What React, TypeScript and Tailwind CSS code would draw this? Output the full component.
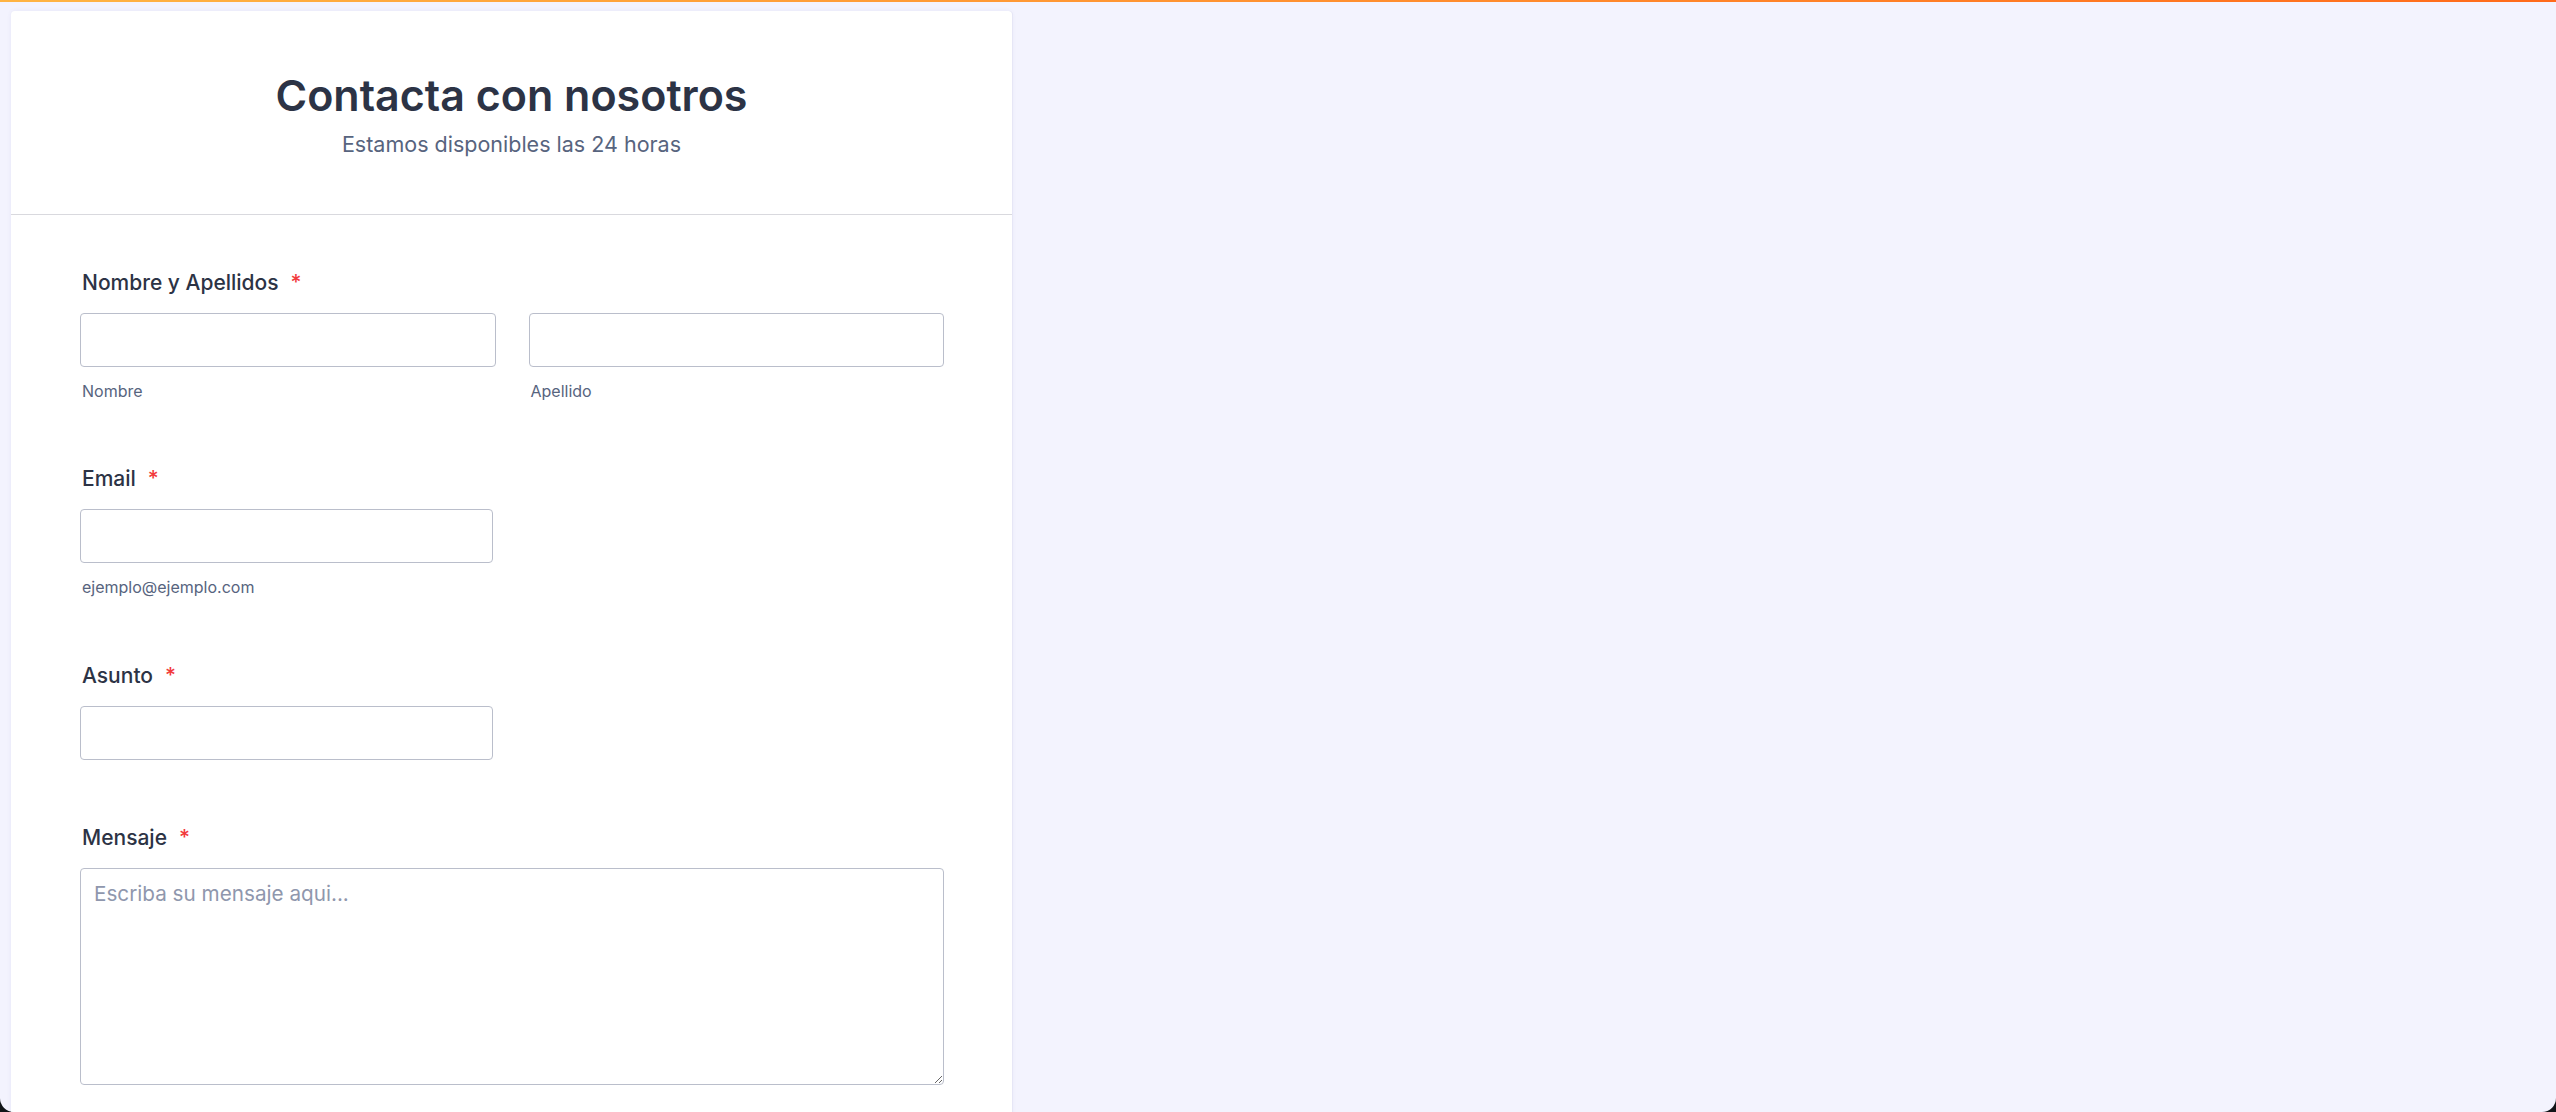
import React from 'react';

interface Field {
  id: string;
  label: string;
  sublabel?: string;
}

const fields: Field[] = [
  { id: 'email', label: 'Email', sublabel: 'ejemplo@ejemplo.com' },
  { id: 'asunto', label: 'Asunto' },
];

function Label({ text }: { text: string }) {
  return (
    <label className="block mb-[16px] pl-[2px] text-[21px] leading-[28px] font-medium text-[#2c3345]">
      {text}
      <span className="ml-[12px] text-[#f23a3c]">*</span>
    </label>
  );
}

function Input({ className = '' }: { className?: string }) {
  return (
    <input
      type="text"
      className={`block h-[54px] rounded-[4px] border border-[#babecb] bg-white px-[13px] text-[20px] outline-none ${className}`}
    />
  );
}

function Sublabel({ text }: { text: string }) {
  return <p className="mt-[14px] pl-[2px] text-[16px] leading-[21px] text-[#57647e]">{text}</p>;
}

export default function App() {
  return (
    <div className="h-screen w-full bg-[#111518]" style={{ fontFamily: 'Inter, "Noto Sans", sans-serif' }}>
      <div className="h-full w-full overflow-hidden rounded-b-[14px] bg-[#f3f3fe]">
        <div className="h-[2px] w-full bg-gradient-to-r from-[#ffb443] to-[#ff6a1a]" />

        <div className="ml-[11px] mt-[9px] w-[1001px] rounded-t-[4px] bg-white pb-[120px] shadow-[1px_0_0_#e6e6f6,0_0_4px_rgba(80,80,160,0.08)]">
          {/* Header */}
          <div className="border-b border-[#d9d9de] pt-[59px] pb-[56px] text-center">
            <h1 className="text-[43px] leading-[50px] font-semibold text-[#2c3345]">Contacta con nosotros</h1>
            <p className="mt-[10px] text-[21.5px] leading-[28px] text-[#57647e]">Estamos disponibles las 24 horas</p>
          </div>

          {/* Form */}
          <div className="pl-[69px] pr-[68px] pt-[54px]">
            <div className="mb-[63px]">
              <Label text="Nombre y Apellidos" />
              <div className="grid grid-cols-2 gap-[33px]">
                <div>
                  <Input className="w-full" />
                  <Sublabel text="Nombre" />
                </div>
                <div>
                  <Input className="w-full" />
                  <Sublabel text="Apellido" />
                </div>
              </div>
            </div>

            {fields.map((f) => (
              <div key={f.id} className="mb-[64px]">
                <Label text={f.label} />
                <Input className="w-[413px]" />
                {f.sublabel && <Sublabel text={f.sublabel} />}
              </div>
            ))}

            <div>
              <Label text="Mensaje" />
              <textarea
                placeholder="Escriba su mensaje aqui..."
                className="block h-[217px] w-full rounded-[4px] border border-[#babecb] bg-white px-[13px] py-[11px] text-[20.7px] leading-[28px] text-[#2c3345] outline-none placeholder:text-[#8f97ad]"
              />
            </div>
          </div>
        </div>
      </div>
    </div>
  );
}
